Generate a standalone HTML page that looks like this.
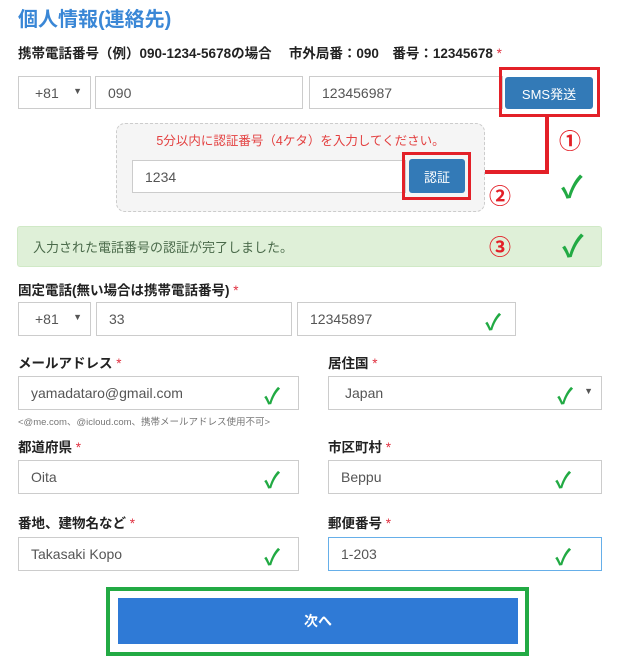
<!DOCTYPE html>
<html><head><meta charset="utf-8"><style>
*{box-sizing:border-box;margin:0;padding:0}
body{width:622px;height:665px;background:#fff;font-family:"Liberation Sans","Noto Sans CJK JP",sans-serif;position:relative;overflow:hidden;color:#333}
.a{position:absolute}
.t{left:18px;top:3px;font-size:20px;font-weight:bold;color:#3a87d6}
.lb{font-size:13.5px;font-weight:bold;color:#222}
.st{color:#e03040;font-weight:normal}
.in{border:1px solid #ccc;background:#fff;font-size:14px;color:#555;padding-left:12px;display:flex;align-items:center}
.ck{color:#22aa44;font-size:22px;position:absolute;font-weight:bold}
.sel::after{content:"▼";position:absolute;right:8px;top:9px;font-size:9px;color:#555}
.red{border:3px solid #e32028}
.num{color:#e32028;font-size:22px;font-weight:bold}
</style></head><body>
<div class="a t">個人情報(連絡先)</div>
<div class="a lb" style="left:18px;top:42px">携帯電話番号（例）090-1234-5678の場合　 市外局番：090　番号：12345678 <span class="st">*</span></div>
<div class="a in sel" style="left:18px;top:76px;width:73px;height:33px;padding-left:16px">+81</div>
<div class="a in" style="left:95px;top:76px;width:208px;height:33px">090</div>
<div class="a in" style="left:309px;top:76px;width:194px;height:33px">123456987</div>
<div class="a red" style="left:499px;top:67px;width:101px;height:50px"></div>
<div class="a" style="left:505px;top:77px;width:88px;height:32px;background:#337ab7;border-radius:3px;color:#fff;font-size:13px;display:flex;align-items:center;justify-content:center">SMS発送</div>
<div class="a" style="left:545px;top:116px;width:4px;height:58px;background:#e32028"></div>
<div class="a" style="left:484px;top:170px;width:65px;height:4px;background:#e32028"></div>
<div class="a num" style="left:559px;top:124px">①</div>
<div class="a num" style="left:489px;top:179px">②</div>
<div class="ck" style="left:561px;top:163px;font-size:30px">✓</div>
<div class="a" style="left:116px;top:123px;width:369px;height:89px;background:#f5f5f5;border:1px dashed #ccc;border-radius:9px"></div>
<div class="a" style="left:116px;top:130px;width:369px;text-align:center;font-size:12.5px;color:#e34040">5分以内に認証番号（4ケタ）を入力してください。</div>
<div class="a in" style="left:132px;top:160px;width:274px;height:33px">1234</div>
<div class="a red" style="left:402px;top:152px;width:69px;height:48px"></div>
<div class="a" style="left:409px;top:159px;width:56px;height:34px;background:#337ab7;border-radius:3px;color:#fff;font-size:13px;display:flex;align-items:center;justify-content:center">認証</div>
<div class="a" style="left:17px;top:226px;width:585px;height:41px;background:#dff0d8;border:1px solid #d0e9c6;border-radius:3px"></div>
<div class="a" style="left:33px;top:237px;font-size:13px;color:#4a6a4a">入力された電話番号の認証が完了しました。</div>
<div class="a num" style="left:489px;top:230px">③</div>
<div class="ck" style="left:562px;top:222px;font-size:30px">✓</div>
<div class="a lb" style="left:18px;top:279px">固定電話(無い場合は携帯電話番号) <span class="st">*</span></div>
<div class="a in sel" style="left:18px;top:302px;width:73px;height:34px;padding-left:16px">+81</div>
<div class="a in" style="left:96px;top:302px;width:196px;height:34px">33</div>
<div class="a in" style="left:297px;top:302px;width:219px;height:34px">12345897<span class="ck" style="right:14px;top:2px">✓</span></div>
<div class="a lb" style="left:18px;top:352px">メールアドレス <span class="st">*</span></div>
<div class="a lb" style="left:328px;top:352px">居住国 <span class="st">*</span></div>
<div class="a in" style="left:18px;top:376px;width:281px;height:34px">yamadataro@gmail.com<span class="ck" style="right:18px;top:2px">✓</span></div>
<div class="a in sel" style="left:328px;top:376px;width:274px;height:34px;padding-left:16px">Japan<span class="ck" style="right:28px;top:2px">✓</span></div>
<div class="a" style="left:18px;top:414px;font-size:9.5px;color:#777">&lt;@me.com、@icloud.com、携帯メールアドレス使用不可&gt;</div>
<div class="a lb" style="left:18px;top:436px">都道府県 <span class="st">*</span></div>
<div class="a lb" style="left:328px;top:436px">市区町村 <span class="st">*</span></div>
<div class="a in" style="left:18px;top:460px;width:281px;height:34px">Oita<span class="ck" style="right:18px;top:2px">✓</span></div>
<div class="a in" style="left:328px;top:460px;width:274px;height:34px">Beppu<span class="ck" style="right:30px;top:2px">✓</span></div>
<div class="a lb" style="left:18px;top:512px">番地、建物名など <span class="st">*</span></div>
<div class="a lb" style="left:328px;top:512px">郵便番号 <span class="st">*</span></div>
<div class="a in" style="left:18px;top:537px;width:281px;height:34px">Takasaki Kopo<span class="ck" style="right:18px;top:2px">✓</span></div>
<div class="a in" style="left:328px;top:537px;width:274px;height:34px;border-color:#66afe9">1-203<span class="ck" style="right:30px;top:2px">✓</span></div>
<div class="a" style="left:106px;top:587px;width:423px;height:69px;border:4px solid #22aa44"></div>
<div class="a" style="left:118px;top:598px;width:400px;height:46px;background:#2f7ad6;color:#fff;font-weight:bold;font-size:14px;display:flex;align-items:center;justify-content:center">次へ</div>
</body></html>
